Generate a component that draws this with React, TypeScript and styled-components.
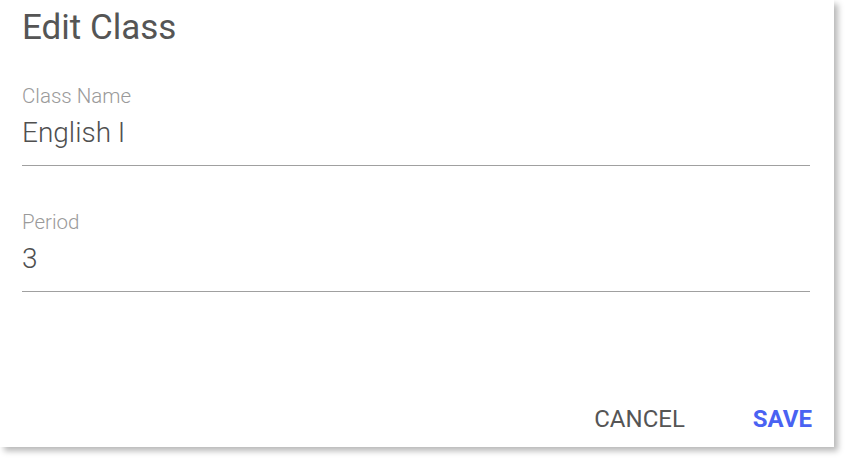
import styled, { createGlobalStyle } from 'styled-components';

const GlobalStyle = createGlobalStyle`
  html, body {
    margin: 0;
    padding: 0;
    background: #ffffff;
    font-family: Roboto, "Liberation Sans", sans-serif;
  }
`;

const Page = styled.div`
  width: 846px;
  height: 460px;
  overflow: hidden;
  background: #ffffff;
`;

const Dialog = styled.div`
  width: 834px;
  height: 447px;
  box-sizing: border-box;
  background: #ffffff;
  box-shadow: 4px 4px 6px rgba(0, 0, 0, 0.28);
  padding: 0 24px 0 22px;
  display: flex;
  flex-direction: column;
`;

const Title = styled.h2`
  margin: 0;
  padding-top: 8px;
  font-size: 35px;
  font-weight: 400;
  line-height: 40px;
  color: #555555;
`;

const Fields = styled.div`
  display: flex;
  flex-direction: column;
  gap: 44px;
  margin-top: 36px;
  flex: 1;
`;

const Field = styled.label`
  display: flex;
  flex-direction: column;
  border-bottom: 1px solid #a0a0a0;
`;

const Label = styled.span`
  font-size: 20.5px;
  font-weight: 300;
  line-height: 24px;
  color: #9a9a9a;
`;

const Value = styled.span`
  font-size: 28px;
  font-weight: 300;
  line-height: 32px;
  color: #4f4f4f;
  padding: 9px 0 16px;
`;

const Actions = styled.div`
  display: flex;
  justify-content: flex-end;
  align-items: center;
  gap: 68px;
  padding-bottom: 16px;
  margin-right: -2px;
`;

const ActionButton = styled.button<{ $primary?: boolean }>`
  border: none;
  background: none;
  padding: 0;
  font-family: Roboto, "Liberation Sans", sans-serif;
  font-size: 24px;
  line-height: 24px;
  text-transform: uppercase;
  font-weight: ${({ $primary }) => ($primary ? 700 : 400)};
  color: ${({ $primary }) => ($primary ? '#4a62f2' : '#555555')};
  cursor: pointer;
`;

export default function App() {
  return (
    <Page>
      <GlobalStyle />
      <Dialog>
        <Title>Edit Class</Title>
        <Fields>
          <Field>
            <Label>Class Name</Label>
            <Value>English I</Value>
          </Field>
          <Field>
            <Label>Period</Label>
            <Value>3</Value>
          </Field>
        </Fields>
        <Actions>
          <ActionButton>Cancel</ActionButton>
          <ActionButton $primary>Save</ActionButton>
        </Actions>
      </Dialog>
    </Page>
  );
}
